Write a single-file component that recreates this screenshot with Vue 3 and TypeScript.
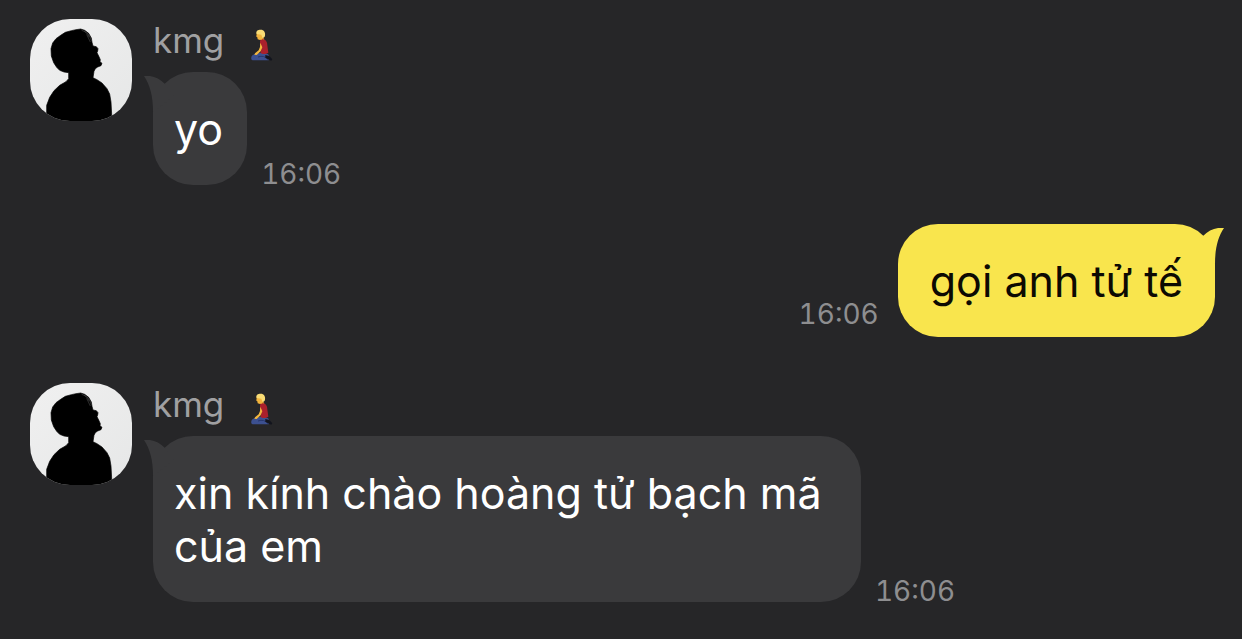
<script setup lang="ts">
interface Message {
  id: number
  mine: boolean
  author?: string
  text: string
  time: string
}

const messages: Message[] = [
  { id: 1, mine: false, author: 'kmg', text: 'yo', time: '16:06' },
  { id: 2, mine: true, text: 'gọi anh tử tế', time: '16:06' },
  { id: 3, mine: false, author: 'kmg', text: 'xin kính chào hoàng tử bạch mã của em', time: '16:06' },
]
</script>

<template>
  <main class="chat">
    <article v-for="m in messages" :key="m.id" class="message" :class="m.mine ? 'mine' : 'theirs'">
      <svg v-if="!m.mine" class="avatar" viewBox="30 27 306 306" aria-hidden="true">
        <defs>
          <linearGradient :id="`wall-${m.id}`" x1="0" y1="0" x2="1" y2="1">
            <stop offset="0" stop-color="#f0f0f0" />
            <stop offset="1" stop-color="#e6e7e7" />
          </linearGradient>
        </defs>
        <rect x="30" y="27" width="306" height="306" :fill="`url(#wall-${m.id})`" />
        <path
          d="M146 188L132 186L119 181L110 172L101 158L94 138L93 116L98 99L108 86L122 76L136 67L154 62L168 59L182 57L194 61L206 70L214 84L216 97L219 108L229 110L234 116L233 123L231 128L236 138L241 149L240 155L246 160L243 167L233 171L226 176L222 184L219 203L231 209L246 219L261 236L269 252L273 276L276 333H80V300L80 286L89 262L102 242L119 226L138 215L146 206Z"
          fill="#000"
          stroke="#000"
          stroke-width="2"
          stroke-linejoin="round"
        />
        <path d="M185 61Q201 65 208 82M192 63Q210 72 214 92M200 73L211 96" fill="none" stroke="#454545" stroke-width="2" />
      </svg>
      <div class="body">
        <header v-if="m.author" class="author">
          <span>{{ m.author }}</span>
          <svg class="kneeling" viewBox="33 27 66 96" role="img" aria-label="Kneeling person">
            <path d="M34 112C35 103 50 99 66 98L84 102L90 113L86 121H38C34 120 33 116 34 112Z" fill="#3c5090" />
            <path d="M54 111Q72 104 84 119" fill="none" stroke="#27366c" stroke-width="3" />
            <path d="M76 105L88 108L97 118L94 122L88 120L76 113Z" fill="#12141d" />
            <path d="M62 55L72 55L73 64L63 65Z" fill="#e0992c" />
            <path d="M60 62C66 55 77 57 81 68L85 98C76 104 66 102 61 99C67 86 62 82 60 76Z" fill="#aa202c" />
            <path d="M61 68L67 82L62 94L50 105L43 104L45 100L56 91L60 81Z" fill="#f3b73f" />
            <path d="M50 40C57 33 69 36 71 43C73 52 67 60 60 60L53 58L52 52L49 50Z" fill="#f2b43d" />
            <path d="M50 42C46 33 54 29 62 29C72 29 77 37 75 47C74 52 70 54 67 53L64 44Z" fill="#f9dc75" />
          </svg>
        </header>
        <div class="line">
          <div class="bubble">
            <svg class="tail" viewBox="0 0 30 36" aria-hidden="true">
              <path d="M0 0C8 -1 15 2 21 8L30 20L9 36C9 20 6 9 0 0Z" />
            </svg>
            <p class="text">{{ m.text }}</p>
          </div>
          <time class="time">{{ m.time }}</time>
        </div>
      </div>
    </article>
  </main>
</template>

<style>
body {
  margin: 0;
  background: #262628;
}
</style>

<style scoped>
.chat {
  box-sizing: border-box;
  min-height: 100vh;
  padding: 19px 27px 36px 30px;
  background: #262628;
  font-family: Inter, "Noto Sans", sans-serif;
}

.message {
  display: flex;
  align-items: flex-start;
  gap: 21px;
}

.message + .message {
  margin-top: 46px;
}

.message + .mine {
  margin-top: 39px;
}

.mine {
  justify-content: flex-end;
}

.avatar {
  flex: none;
  width: 102px;
  height: 102px;
  border-radius: 40px;
}

.author {
  display: flex;
  align-items: center;
  gap: 27px;
  height: 42px;
  margin-bottom: 11px;
  color: #a0a0a2;
  font-size: 35px;
  line-height: 42px;
}

.kneeling {
  width: 22px;
  height: 32px;
  margin-top: 10px;
}

.line {
  display: flex;
  align-items: flex-end;
  gap: 14px;
}

.mine .line {
  flex-direction: row-reverse;
  gap: 19px;
}

.bubble {
  position: relative;
  box-sizing: border-box;
  max-width: 57vw;
  padding: 31px 24px 29px 21px;
  border-radius: 40px;
  background: #3a3a3c;
  color: #fff;
}

.mine .bubble {
  padding-right: 32px;
  padding-left: 32px;
  background: #f9e54d;
  color: #0c0a02;
}

.tail {
  position: absolute;
  top: 4px;
  left: -9px;
  width: 30px;
  height: 36px;
  fill: #3a3a3c;
}

.mine .tail {
  right: -9px;
  left: auto;
  fill: #f9e54d;
  transform: scaleX(-1);
}

.text {
  margin: 0;
  font-size: 43px;
  line-height: 53px;
}

.time {
  color: #8e8e90;
  font-size: 28px;
  font-variant-numeric: tabular-nums;
  line-height: 22px;
}

.mine .time {
  margin-bottom: 12px;
}
</style>
